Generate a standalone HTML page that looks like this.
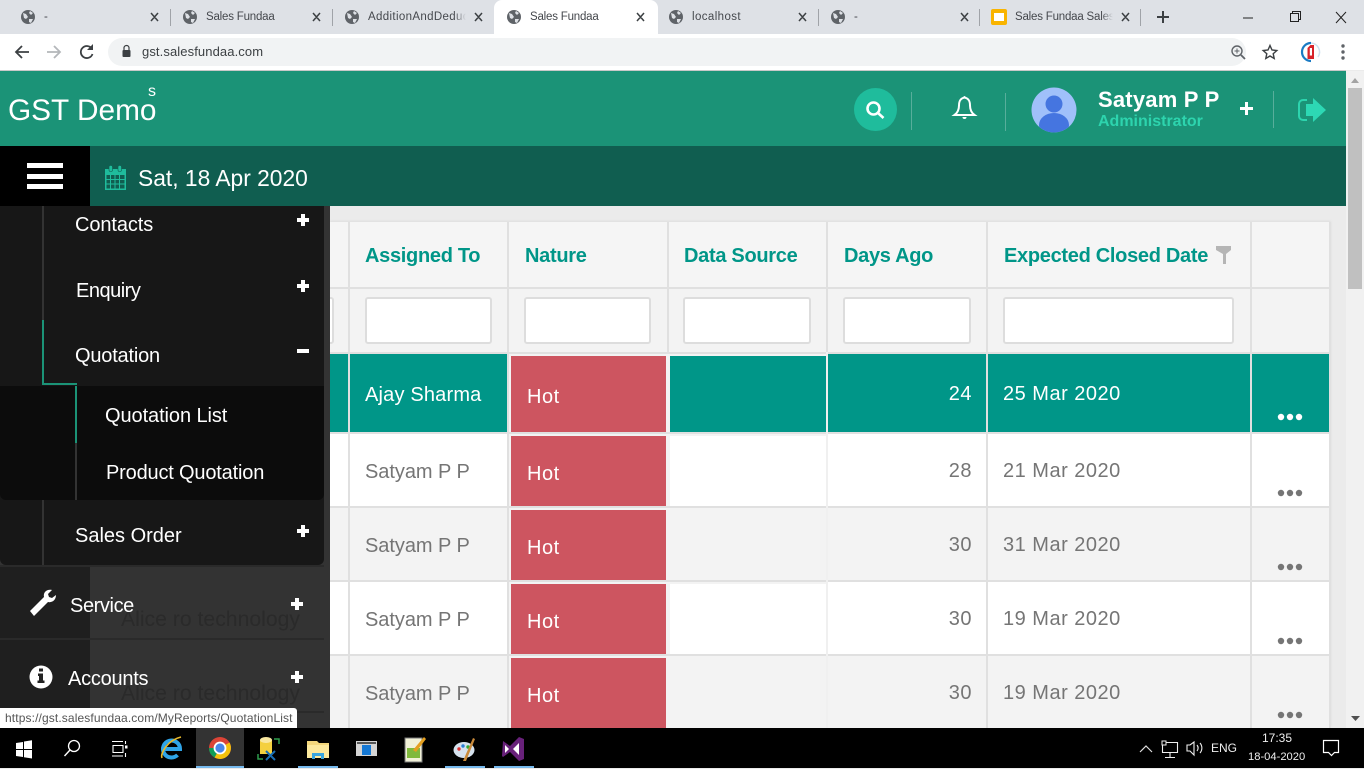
<!DOCTYPE html>
<html><head><meta charset="utf-8"><style>
html,body{margin:0;padding:0;width:1364px;height:768px;overflow:hidden;background:#ebebeb;font-family:"Liberation Sans",sans-serif}
.b,.t,svg{position:absolute}
.t{white-space:nowrap;line-height:24px;height:24px}
.tab{font-size:11.5px;color:#45484d;letter-spacing:-.2px}
.h{font-size:20px;font-weight:bold;color:#009688;letter-spacing:-.3px}
.s{font-size:20px;color:#fff}
.c{font-size:20px;color:#757575;letter-spacing:.5px}
.n{letter-spacing:-.05px}
</style></head><body>

<!-- chrome -->
<div class="b" style="left:0;top:0;width:1364px;height:34px;background:#dee1e6"></div>
<div class="b" style="left:0;top:34px;width:1364px;height:36px;background:#fff"></div>
<div class="b" style="left:494px;top:0;width:164px;height:34px;background:#fff;border-radius:8px 8px 0 0"></div>
<div class="b" style="left:108px;top:38px;width:1138px;height:28px;background:#f1f3f4;border-radius:14px"></div>
<div class="b" style="left:170px;top:9px;width:1px;height:17px;background:#a0a3a8"></div>
<div class="b" style="left:332px;top:9px;width:1px;height:17px;background:#a0a3a8"></div>
<div class="b" style="left:818px;top:9px;width:1px;height:17px;background:#a0a3a8"></div>
<div class="b" style="left:979px;top:9px;width:1px;height:17px;background:#a0a3a8"></div>
<div class="b" style="left:1140px;top:9px;width:1px;height:17px;background:#a0a3a8"></div>
<svg style="left:0;top:0" width="1364" height="70" fill="none">
<defs><g id="gl"><circle r="7" fill="#5f6368"/><path d="M-5-4l3 1 2 3-2 2-2-1zM2-6l3 2-2 2-2-2zM1 2l4 0-2 4-2-1z" fill="#dee1e6"/></g></defs>
<use href="#gl" x="28" y="17"/><use href="#gl" x="190" y="17"/><use href="#gl" x="352" y="17"/><use href="#gl" x="514" y="17"/><use href="#gl" x="676" y="17"/><use href="#gl" x="838" y="17"/>
<g stroke="#3c4043" stroke-width="1.5">
<path d="M151 13l7 8M158 13l-7 8M313 13l7 8M320 13l-7 8M475 13l7 8M482 13l-7 8M637 13l7 8M644 13l-7 8M799 13l7 8M806 13l-7 8M961 13l7 8M968 13l-7 8M1122 13l7 8M1129 13l-7 8"/>
</g>
<rect x="991" y="9" width="16" height="16" rx="2" fill="#f9b400"/><rect x="994" y="13" width="10" height="8" fill="#fff"/>
<path d="M1157 17h12M1163 11v12" stroke="#3c4043" stroke-width="2"/>
<path d="M1243 18h10" stroke="#222" stroke-width="1"/>
<path d="M1290.500 13.500h8v8h-8zM1292.500 13.500v-2h8v8h-2" stroke="#222"/>
<path d="M1336 12l10 11M1346 12l-10 11" stroke="#222"/>
<path d="M29 52H16M22 46l-6 6 6 6" stroke="#3c4043" stroke-width="1.800"/>
<path d="M47 52h13M54 46l6 6-6 6" stroke="#b4b7ba" stroke-width="1.800"/>
<path d="M92 49a6 6 0 1 0 .5 5" stroke="#3c4043" stroke-width="1.800"/><path d="M93 44v6h-6z" fill="#3c4043"/>
<rect x="122.500" y="50" width="8" height="7" rx="1" fill="#3c4043"/><path d="M124 50v-2a2.500 2.500 0 0 1 5 0v2" stroke="#3c4043" stroke-width="1.200"/>
<circle cx="1237" cy="51" r="5" stroke="#5f6368" stroke-width="1.400"/><path d="M1241 55l4 4" stroke="#5f6368" stroke-width="1.800"/><path d="M1234.500 51h5M1237 48.500v5" stroke="#5f6368"/>
<path d="M1270 45.500l2 4.500 4.800.5-3.600 3.200 1 4.800-4.200-2.500-4.200 2.500 1-4.800-3.600-3.200 4.800-.5z" stroke="#3c4043" stroke-width="1.400"/>
<path d="M1311 43a9 9 0 0 0 0 18" stroke="#1a7bc4" stroke-width="2.200"/><path d="M1311 43a9 9 0 0 1 7 14" stroke="#cfe2f0" stroke-width="1.500"/>
<path d="M1307.500 59v-11l3-3h3.500v14z" fill="#d8232a"/><rect x="1309.800" y="48" width="2.200" height="7.500" fill="#fff"/>
<g fill="#5f6368"><circle cx="1343" cy="46" r="1.700"/><circle cx="1343" cy="52" r="1.700"/><circle cx="1343" cy="58" r="1.700"/></g>
</svg>
<div class="t tab" style="left:44px;top:5px">-</div>
<div class="t tab" style="left:206px;top:5px">Sales Fundaa</div>
<div class="t tab" style="left:368px;top:5px;width:98px;overflow:hidden;letter-spacing:.35px">AdditionAndDeduct</div>
<div class="b" style="left:454px;top:8px;width:12px;height:18px;background:linear-gradient(90deg,rgba(222,225,230,0),#dee1e6)"></div>
<div class="t tab" style="left:530px;top:5px">Sales Fundaa</div>
<div class="t tab" style="left:692px;top:5px;letter-spacing:.4px">localhost</div>
<div class="t tab" style="left:854px;top:5px">-</div>
<div class="t tab" style="left:1015px;top:5px;width:98px;overflow:hidden">Sales Fundaa Sales</div>
<div class="b" style="left:1101px;top:8px;width:12px;height:18px;background:linear-gradient(90deg,rgba(222,225,230,0),#dee1e6)"></div>
<div class="t" style="left:142px;top:40px;font-size:13px;color:#3c4043;letter-spacing:.1px">gst.salesfundaa.com</div>

<!-- page header -->
<div class="b" style="left:0;top:70px;width:1346px;height:1px;background:#c9c9c9"></div>
<div class="b" style="left:0;top:71px;width:1346px;height:75px;background:#1b9377"></div>
<div class="b" style="left:0;top:146px;width:1346px;height:60px;background:#105e50"></div>
<div class="b" style="left:0;top:146px;width:90px;height:60px;background:#000"></div>
<div class="b" style="left:27px;top:163px;width:36px;height:5px;background:#fff"></div>
<div class="b" style="left:27px;top:174px;width:36px;height:5px;background:#fff"></div>
<div class="b" style="left:27px;top:184px;width:36px;height:5px;background:#fff"></div>
<div class="t" style="left:8px;top:99px;font-size:29.800px;color:#fff">GST Demo</div>
<div class="t" style="left:148px;top:80px;font-size:16px;color:#fff">s</div>
<div class="t" style="left:138px;top:166px;font-size:22.800px;color:#fff">Sat, 18 Apr 2020</div>
<svg style="left:104px;top:164px" width="24" height="26" fill="none">
<path d="M1 5h21v21H1z" fill="#1fbc9c"/><path d="M2.500 11h18v13.500h-18z" fill="#105e50"/>
<path d="M2.500 15.500h18M2.500 20h18M6.500 11v14M11 11v14M15.500 11v14" stroke="#1fbc9c" stroke-width="1"/>
<rect x="5" y="1.500" width="3.500" height="6" rx="1.500" fill="#1fbc9c" stroke="#105e50" stroke-width=".6"/>
<rect x="14" y="1.500" width="3.500" height="6" rx="1.500" fill="#1fbc9c" stroke="#105e50" stroke-width=".6"/>
</svg>
<div class="b" style="left:854px;top:88px;width:43px;height:43px;border-radius:50%;background:#1fbc9c"></div>
<svg style="left:859px;top:93px" width="32" height="32" fill="none"><circle cx="14.500" cy="15.500" r="6" stroke="#fff" stroke-width="2.600"/><path d="M19 20l5.500 5" stroke="#fff" stroke-width="2.600"/></svg>
<div class="b" style="left:911px;top:92px;width:1px;height:38px;background:#58ae9b"></div>
<div class="b" style="left:1005px;top:93px;width:1px;height:38px;background:#58ae9b"></div>
<div class="b" style="left:1273px;top:91px;width:1px;height:37px;background:#58ae9b"></div>
<svg style="left:950px;top:94px" width="30" height="30" fill="none"><path d="M14.500 3.500c-4.500 1-5.500 4-5.500 8 0 4-1 7-4.500 9.500h20c-3.500-2.500-4.500-5.500-4.500-9.500 0-4-1-7-5.500-8z" stroke="#fff" stroke-width="2"/><path d="M12.500 23h4a2 2 0 0 1-4 0z" fill="#fff"/><circle cx="14.500" cy="3" r="1" fill="#fff"/></svg>
<svg style="left:1031px;top:87px" width="46" height="46"><defs><clipPath id="av"><circle cx="23" cy="23" r="22.500"/></clipPath></defs><circle cx="23" cy="23" r="22.500" fill="#a0c0fa"/><circle cx="23" cy="17" r="8.500" fill="#4575e0"/><ellipse cx="23" cy="38" rx="15" ry="12" fill="#4575e0" clip-path="url(#av)"/></svg>
<div class="t" style="left:1098px;top:88px;font-size:22px;font-weight:bold;color:#fff;letter-spacing:.2px">Satyam P P</div>
<div class="t" style="left:1098px;top:110px;font-size:16px;font-weight:bold;color:#2dd4ae">Administrator</div>
<div class="b" style="left:1240px;top:107px;width:13px;height:3px;background:#fff"></div>
<div class="b" style="left:1245px;top:102px;width:3px;height:13px;background:#fff"></div>
<svg style="left:1296px;top:96px" width="34" height="28" fill="none"><path d="M11 4H7a4 4 0 0 0-4 4v12a4 4 0 0 0 4 4h4" stroke="#2dd4ae" stroke-width="2"/><path d="M10 8h7V2l13 12-13 12v-6h-7z" fill="#2dd8b4"/></svg>

<!-- scrollbar -->
<div class="b" style="left:1346px;top:71px;width:18px;height:657px;background:#f1f1f1"></div>
<div class="b" style="left:1348px;top:88px;width:14px;height:201px;background:#c0c0c0"></div>
<svg style="left:1346px;top:71px" width="18" height="657"><path d="M5 12l4-5 4 5z" fill="#a3a3a3"/><path d="M5 645h9l-4.500 5z" fill="#505050"/></svg>

<!-- table -->
<div class="b" style="left:330px;top:222px;width:1001px;height:506px;background:#f3f3f3;box-shadow:0 -1px 2px #ddd"></div>
<div class="b" style="left:330px;top:222px;width:1000px;height:65px;background:#f5f5f5"></div>
<div class="b" style="left:330px;top:287px;width:1000px;height:2px;background:#e0e0e0"></div>
<div class="b" style="left:330px;top:352px;width:1000px;height:2px;background:#e0e0e0"></div>
<div class="b" style="left:330px;top:354px;width:999px;height:78px;background:#009688"></div>
<div class="b" style="left:330px;top:432px;width:1000px;height:2px;background:#e0e0e0"></div>
<div class="b" style="left:330px;top:434px;width:999px;height:72px;background:#fff"></div>
<div class="b" style="left:330px;top:506px;width:1000px;height:2px;background:#e0e0e0"></div>
<div class="b" style="left:330px;top:580px;width:1000px;height:2px;background:#e0e0e0"></div>
<div class="b" style="left:330px;top:582px;width:999px;height:72px;background:#fff"></div>
<div class="b" style="left:330px;top:654px;width:1000px;height:2px;background:#e0e0e0"></div>
<div class="b" style="left:1329px;top:222px;width:2px;height:506px;background:#e0e0e0"></div>
<!-- nature / data source cell surrounds -->
<div class="b" style="left:509px;top:434px;width:318px;height:72px;background:#f3f3f3"></div>
<div class="b" style="left:509px;top:582px;width:318px;height:72px;background:#f3f3f3"></div>
<div class="b" style="left:509px;top:354px;width:318px;height:78px;background:#f3f3f3"></div>
<div class="b" style="left:670px;top:356px;width:156px;height:76px;background:#009688"></div>
<div class="b" style="left:670px;top:436px;width:156px;height:70px;background:#fff"></div>
<div class="b" style="left:670px;top:584px;width:156px;height:70px;background:#fff"></div>
<div class="b" style="left:511px;top:356px;width:155px;height:76px;background:#cd5560"></div>
<div class="b" style="left:511px;top:436px;width:155px;height:70px;background:#cd5560"></div>
<div class="b" style="left:511px;top:510px;width:155px;height:70px;background:#cd5560"></div>
<div class="b" style="left:511px;top:584px;width:155px;height:70px;background:#cd5560"></div>
<div class="b" style="left:511px;top:658px;width:155px;height:70px;background:#cd5560"></div>
<!-- column lines -->
<div class="b" style="left:348px;top:222px;width:2px;height:506px;background:#e0e0e0"></div>
<div class="b" style="left:507px;top:222px;width:2px;height:506px;background:#e0e0e0"></div>
<div class="b" style="left:667px;top:222px;width:2px;height:130px;background:#e0e0e0"></div>
<div class="b" style="left:826px;top:222px;width:2px;height:506px;background:#f0f0f0"></div>
<div class="b" style="left:826px;top:222px;width:2px;height:130px;background:#e0e0e0"></div>
<div class="b" style="left:986px;top:222px;width:2px;height:506px;background:#e0e0e0"></div>
<div class="b" style="left:1250px;top:222px;width:2px;height:506px;background:#e0e0e0"></div>
<!-- filter inputs -->
<div class="b" style="left:300px;top:297px;width:30px;height:43px;background:#fff;border:2px solid #ddd;border-radius:3px"></div>
<div class="b" style="left:365px;top:297px;width:123px;height:43px;background:#fff;border:2px solid #ddd;border-radius:3px"></div>
<div class="b" style="left:524px;top:297px;width:123px;height:43px;background:#fff;border:2px solid #ddd;border-radius:3px"></div>
<div class="b" style="left:683px;top:297px;width:124px;height:43px;background:#fff;border:2px solid #ddd;border-radius:3px"></div>
<div class="b" style="left:843px;top:297px;width:124px;height:43px;background:#fff;border:2px solid #ddd;border-radius:3px"></div>
<div class="b" style="left:1003px;top:297px;width:227px;height:43px;background:#fff;border:2px solid #ddd;border-radius:3px"></div>
<!-- headers -->
<div class="t h" style="left:365px;top:244px">Assigned To</div>
<div class="t h" style="left:525px;top:244px">Nature</div>
<div class="t h" style="left:684px;top:244px">Data Source</div>
<div class="t h" style="left:844px;top:244px">Days Ago</div>
<div class="t h" style="left:1004px;top:244px">Expected Closed Date</div>
<svg style="left:1215px;top:245px" width="18" height="20"><path d="M1 1h15v4l-5 4v10h-3V9L1 5z" fill="#b5b5b5"/></svg>
<!-- rows -->
<div class="t c" style="left:365px;top:383px;color:#fff;letter-spacing:.18px">Ajay Sharma</div>
<div class="t c" style="left:527px;top:385px;color:#fff">Hot</div>
<div class="t c" style="right:392px;top:382px;color:#fff">24</div>
<div class="t c" style="left:1003px;top:382px;color:#fff">25 Mar 2020</div>
<div class="t c n" style="left:365px;top:460px">Satyam P P</div>
<div class="t c" style="left:527px;top:462px;color:#fff">Hot</div>
<div class="t c" style="right:392px;top:459px">28</div>
<div class="t c" style="left:1003px;top:459px">21 Mar 2020</div>
<div class="t c n" style="left:365px;top:534px">Satyam P P</div>
<div class="t c" style="left:527px;top:536px;color:#fff">Hot</div>
<div class="t c" style="right:392px;top:533px">30</div>
<div class="t c" style="left:1003px;top:533px">31 Mar 2020</div>
<div class="t c n" style="left:365px;top:608px">Satyam P P</div>
<div class="t c" style="left:527px;top:610px;color:#fff">Hot</div>
<div class="t c" style="right:392px;top:607px">30</div>
<div class="t c" style="left:1003px;top:607px">19 Mar 2020</div>
<div class="t c n" style="left:365px;top:682px">Satyam P P</div>
<div class="t c" style="left:527px;top:684px;color:#fff">Hot</div>
<div class="t c" style="right:392px;top:681px">30</div>
<div class="t c" style="left:1003px;top:681px">19 Mar 2020</div>
<svg style="left:1270px;top:400px" width="40" height="328"><g fill="#fff"><circle cx="11" cy="17" r="3.200"/><circle cx="20" cy="17" r="3.200"/><circle cx="29" cy="17" r="3.200"/></g><g fill="#757575"><circle cx="11" cy="93" r="3.200"/><circle cx="20" cy="93" r="3.200"/><circle cx="29" cy="93" r="3.200"/><circle cx="11" cy="167" r="3.200"/><circle cx="20" cy="167" r="3.200"/><circle cx="29" cy="167" r="3.200"/><circle cx="11" cy="241" r="3.200"/><circle cx="20" cy="241" r="3.200"/><circle cx="29" cy="241" r="3.200"/><circle cx="11" cy="315" r="3.200"/><circle cx="20" cy="315" r="3.200"/><circle cx="29" cy="315" r="3.200"/></g></svg>

<!-- sidebar -->
<div class="b" style="left:0;top:206px;width:330px;height:522px;background:#333"></div>
<div class="b" style="left:0;top:567px;width:90px;height:161px;background:#1f1f1f"></div>
<div class="b" style="left:0;top:206px;width:324px;height:359px;background:#171717;border-radius:0 0 6px 6px"></div>
<div class="b" style="left:0;top:386px;width:324px;height:114px;background:#0c0c0c;border-radius:0 0 6px 6px"></div>
<div class="b" style="left:42px;top:206px;width:2px;height:114px;background:#333"></div>
<div class="b" style="left:42px;top:320px;width:2px;height:65px;background:#1b9377"></div>
<div class="b" style="left:42px;top:383px;width:35px;height:2px;background:#1b9377"></div>
<div class="b" style="left:42px;top:500px;width:2px;height:65px;background:#333"></div>
<div class="b" style="left:75px;top:386px;width:2px;height:57px;background:#1b9377"></div>
<div class="b" style="left:75px;top:443px;width:2px;height:57px;background:#333"></div>
<div class="b" style="left:0;top:565px;width:324px;height:2px;background:#2a2a2a"></div>
<div class="b" style="left:0;top:638px;width:324px;height:2px;background:#2a2a2a"></div>
<div class="b" style="left:0;top:711px;width:324px;height:2px;background:#2a2a2a"></div>
<div class="t" style="left:121px;top:608px;font-size:21.200px;color:#2a2a2a">Alice ro technology</div>
<div class="t" style="left:121px;top:682px;font-size:21.200px;color:#2a2a2a">Alice ro technology</div>
<div class="t s" style="left:75px;top:213px;letter-spacing:-.1px">Contacts</div>
<div class="t s" style="left:76px;top:279px;letter-spacing:-.5px">Enquiry</div>
<div class="t s" style="left:75px;top:344px;letter-spacing:-.2px">Quotation</div>
<div class="t s" style="left:105px;top:404px;letter-spacing:-.08px">Quotation List</div>
<div class="t s" style="left:106px;top:461px;letter-spacing:-.18px">Product Quotation</div>
<div class="t s" style="left:75px;top:524px;letter-spacing:0">Sales Order</div>
<div class="t s" style="left:70px;top:594px;letter-spacing:-.4px">Service</div>
<div class="t s" style="left:68px;top:667px;letter-spacing:-.25px">Accounts</div>
<svg style="left:0;top:206px" width="330" height="522"><g fill="#fff">
<path d="M301 8h4v4h4v4h-4v4h-4v-4h-4v-4h4z"/>
<path d="M301 74h4v4h4v4h-4v4h-4v-4h-4v-4h4z"/>
<rect x="297" y="143" width="12" height="4"/>
<path d="M301 319h4v4h4v4h-4v4h-4v-4h-4v-4h4z"/>
<path d="M295 392h4v4h4v4h-4v4h-4v-4h-4v-4h4z"/>
<path d="M295 465h4v4h4v4h-4v4h-4v-4h-4v-4h4z"/>
<path d="M30 405l4 5 14-14c4 1 8-2 8-7l-4 3-3-1-1-3 4-4c-5-1-9 2-8 7z"/>
<circle cx="41" cy="471" r="11.500"/></g>
<path d="M39 462.500h4v3h-4zM38 467.500h5v7h1.500v2.500h-7v-2.500h1.500v-4.500h-1z" fill="#222"/>
</svg>

<!-- status tooltip -->
<div class="b" style="left:0;top:708px;width:297px;height:20px;background:#fff;border-radius:0 3px 0 0"></div>
<div class="t" style="left:5px;top:706px;font-size:12px;color:#555;letter-spacing:.12px">https://gst.salesfundaa.com/MyReports/QuotationList</div>

<!-- taskbar -->
<div class="b" style="left:0;top:728px;width:1364px;height:40px;background:#000"></div>
<div class="b" style="left:196px;top:728px;width:48px;height:40px;background:#333"></div>
<div class="b" style="left:196px;top:766px;width:48px;height:2px;background:#76b9ed"></div>
<div class="b" style="left:298px;top:766px;width:40px;height:2px;background:#76b9ed"></div>
<div class="b" style="left:445px;top:766px;width:40px;height:2px;background:#76b9ed"></div>
<div class="b" style="left:494px;top:766px;width:40px;height:2px;background:#76b9ed"></div>
<svg style="left:0;top:728px" width="560" height="40" fill="none">
<path d="M16 15l7-1v7h-7zM24 13.500l8-1.200V21h-8zM16 22h7v7l-7-1zM24 22h8v8.500l-8-1.200z" fill="#fff"/>
<circle cx="74" cy="18" r="5.500" stroke="#fff" stroke-width="1.300"/><path d="M70 22l-5.500 6" stroke="#fff" stroke-width="1.400"/>
<path d="M112 13.500h11M112 28h11M113 17.500h10v7h-10zM125.500 13v3M125.500 25v4" stroke="#fff" stroke-width="1.100"/><rect x="125" y="17.500" width="2.500" height="3" fill="#fff"/>
<path d="M164 21h16a8.500 8.500 0 1 0-2.500 6" stroke="#2fa4e7" stroke-width="4"/><path d="M162 30c-2-5 6-18 19-21" stroke="#e8b92b" stroke-width="1.600"/>
<circle cx="220" cy="20" r="11" fill="#db4437"/><path d="M220 20l9.500-5.500A11 11 0 0 1 214.500 29.500z" fill="#f4c20d"/><path d="M220 20l-5.500 9.500A11 11 0 0 1 209 20z" fill="#0f9d58"/><circle cx="220" cy="20" r="5.500" fill="#4a86e8" stroke="#fff" stroke-width="1.800"/>
<path d="M260 12h12v14h-12z" fill="#f4d03f"/><ellipse cx="266" cy="12" rx="6" ry="3" fill="#f9e79f"/>
<path d="M258 26v5h5M274 11h5v5" stroke="#2e9c4c" stroke-width="1.500"/><path d="M266 32l9-9M275 32l-9-9" stroke="#1a6fb5" stroke-width="2"/>
<path d="M307 13h10l2 2h10v15h-22z" fill="#f4d77c"/><path d="M307 17h22v13h-22z" fill="#fde99d"/><path d="M312 25h12v6h-3v-3h-6v3h-3z" fill="#3aa6df"/>
<rect x="356" y="13" width="21" height="15" fill="#d4d4d4"/><rect x="357" y="14" width="19" height="2" fill="#555"/><rect x="362" y="17" width="9" height="10" fill="#1578d4"/>
<path d="M405 10h17v24h-17z" fill="#f1f1d8" stroke="#777"/><path d="M407 20h13v10h-13z" fill="#80b93c"/><path d="M413 22l11-13 2 2-10 13z" fill="#e5a020"/>
<ellipse cx="464" cy="22" rx="10.500" ry="8" fill="#d6e2ee"/><circle cx="459" cy="21" r="1.700" fill="#d33"/><circle cx="463" cy="18" r="1.700" fill="#2a7fd4"/><circle cx="468" cy="19" r="1.700" fill="#3a3"/><path d="M463 33l10-23 2 1-9 22z" fill="#c98a3a"/>
<path d="M503 13l7 5 9-9 5 2v20l-5 2-9-9-7 5-1-1z" fill="#68217a"/><path d="M519 15l-6 6 6 6z" fill="#fff"/><path d="M505 17l4 4-4 4z" fill="#fff"/>
</svg>
<svg style="left:1130px;top:728px" width="234" height="40" fill="none">
<path d="M10 24l6-6 6 6" stroke="#ddd" stroke-width="1.200"/>
<path d="M32.500 14.500h15v10h-15zM40 25v4M35 29.500h10" stroke="#eee" stroke-width="1.100"/><rect x="32" y="13" width="4" height="4" fill="#000" stroke="#eee"/>
<path d="M57 17v6h3l4 4V14l-4 3z" stroke="#eee" stroke-width="1.100"/><path d="M67 17c1.500 2 1.500 4 0 6M70 15c2.500 3 2.500 7 0 10" stroke="#eee" stroke-width="1.100"/>
<path d="M193.500 12.500h15v12h-4l-3 3-3-3h-5z" stroke="#fff" stroke-width="1.200"/>
</svg>
<div class="t" style="left:1211px;top:736px;font-size:12px;color:#eee">ENG</div>
<div class="t" style="left:1262px;top:726px;font-size:12px;color:#eee">17:35</div>
<div class="t" style="left:1248px;top:745px;font-size:11.200px;color:#eee">18-04-2020</div>
</body></html>
